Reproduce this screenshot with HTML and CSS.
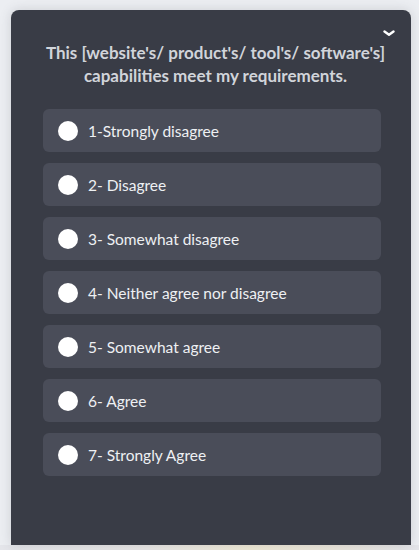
FILE: index.html
```html
<!DOCTYPE html>
<html>
<head>
<meta charset="utf-8">
<link rel="stylesheet" href="styles.css">
</head>
<body>
<div class="page">
  <div class="panel">
    <button class="collapse" aria-label="Collapse">
      <svg width="12" height="7" viewBox="0 0 12 7"><path d="M1.5 1.5 L6 4.8 L10.5 1.5" fill="none" stroke="#ffffff" stroke-width="2.4" stroke-linecap="round" stroke-linejoin="round"/></svg>
    </button>
    <h2 class="question">This [website's/ product's/ tool's/ software's] capabilities meet my requirements.</h2>
    <div class="options">
      <label class="option"><span class="radio"></span><span class="label">1-Strongly disagree</span></label>
      <label class="option"><span class="radio"></span><span class="label">2- Disagree</span></label>
      <label class="option"><span class="radio"></span><span class="label">3- Somewhat disagree</span></label>
      <label class="option"><span class="radio"></span><span class="label">4- Neither agree nor disagree</span></label>
      <label class="option"><span class="radio"></span><span class="label">5- Somewhat agree</span></label>
      <label class="option"><span class="radio"></span><span class="label">6- Agree</span></label>
      <label class="option"><span class="radio"></span><span class="label">7- Strongly Agree</span></label>
    </div>
  </div>
  <div class="strip"></div>
</div>
</body>
</html>
```

FILE: styles.css
```css
html, body {
  margin: 0;
  padding: 0;
}
body {
  width: 419px;
  height: 550px;
  overflow: hidden;
  background: #eceef2;
  font-family: "Source Sans Pro", Lato, "Open Sans", sans-serif;
}
.page {
  display: flex;
  flex-direction: column;
  height: 550px;
  padding-top: 10px;
  box-sizing: border-box;
}
.panel {
  position: relative;
  margin-left: 11px;
  width: 400px;
  height: 535px;
  box-sizing: border-box;
  background: #393c46;
  border-radius: 8px 8px 0 0;
  box-shadow: 0 0 12px rgba(60, 64, 80, 0.18);
  padding-top: 30.5px;
  display: flex;
  flex-direction: column;
}
.collapse {
  position: absolute;
  top: 17px;
  right: 12px;
  width: 20px;
  height: 12px;
  padding: 0;
  border: 0;
  background: transparent;
  display: flex;
  align-items: center;
  justify-content: center;
}
.question {
  margin: 0 20px 0 29px;
  font-size: 17px;
  line-height: 23px;
  font-weight: 700;
  color: #d1d4da;
  text-align: center;
}
.options {
  margin: 22.5px 30px 0 32px;
  display: flex;
  flex-direction: column;
  gap: 11px;
}
.option {
  height: 43px;
  background: #4a4d59;
  border-radius: 6px;
  display: flex;
  align-items: center;
  padding-left: 15px;
  gap: 10px;
}
.radio {
  width: 20px;
  height: 20px;
  border-radius: 50%;
  background: #ffffff;
  flex: none;
}
.label {
  font-size: 15.5px;
  color: #eef0f3;
}
.strip {
  height: 5px;
  background: linear-gradient(90deg, #e4e5ea 0%, #e9e7e6 35%, #efe9d6 60%, #ebe6dc 80%, #e4e5ea 100%);
}
```
